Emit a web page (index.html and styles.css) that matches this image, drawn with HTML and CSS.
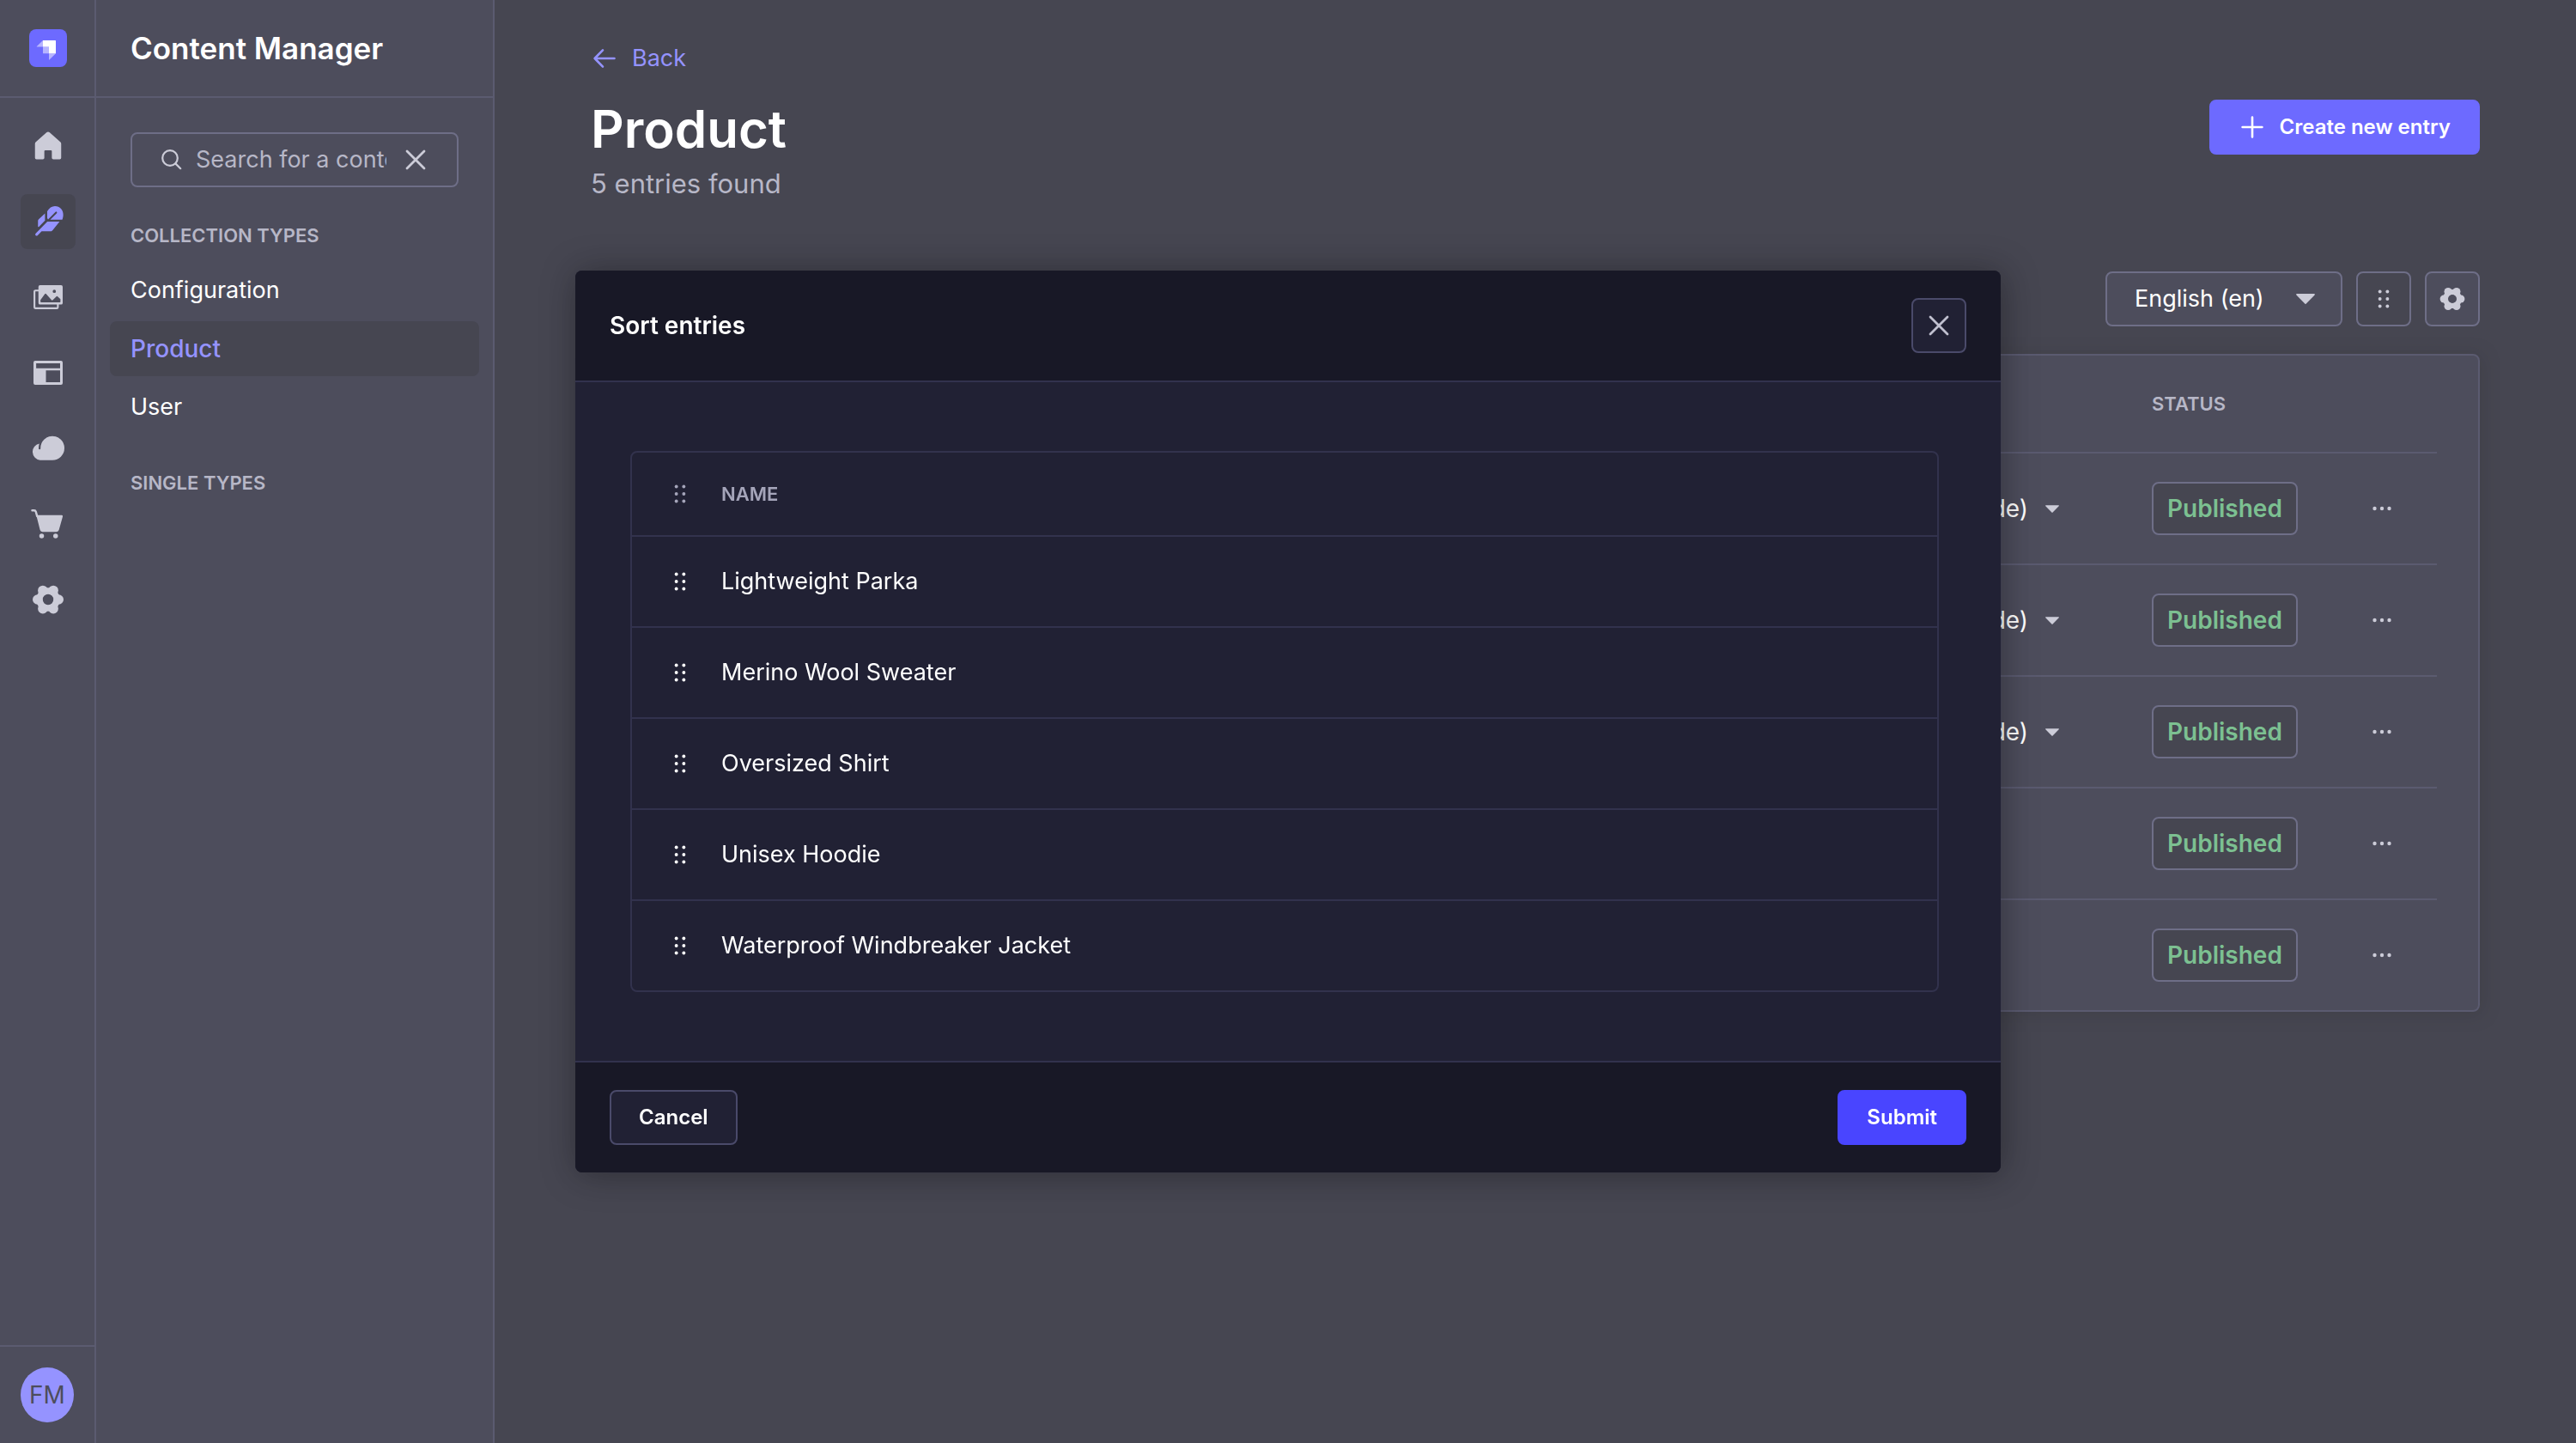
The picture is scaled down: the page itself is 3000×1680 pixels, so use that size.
FILE: index.html
```html
<!DOCTYPE html>
<html lang="en">
<head>
<meta charset="utf-8">
<title>Content Manager</title>
<link rel="stylesheet" href="styles.css">
</head>
<body>
<svg class="sprite" aria-hidden="true">
  <symbol id="gear" viewBox="0 0 32 32">
    <circle cx="16" cy="16" r="8" fill="none" stroke="currentColor" stroke-width="6"/>
    <g fill="currentColor">
      <circle cx="25.8" cy="16" r="4.6"/><circle cx="6.2" cy="16" r="4.6"/>
      <circle cx="20.9" cy="7.5" r="4.6"/><circle cx="11.1" cy="7.5" r="4.6"/>
      <circle cx="20.9" cy="24.5" r="4.6"/><circle cx="11.1" cy="24.5" r="4.6"/>
    </g>
  </symbol>
  <symbol id="drag" viewBox="0 0 32 32">
    <g fill="currentColor">
      <circle cx="10.2" cy="4.600" r="2.600"/><circle cx="21.8" cy="4.600" r="2.600"/>
      <circle cx="10.2" cy="16" r="2.600"/><circle cx="21.8" cy="16" r="2.600"/>
      <circle cx="10.2" cy="27.400" r="2.600"/><circle cx="21.8" cy="27.400" r="2.600"/>
    </g>
  </symbol>
  <symbol id="cross" viewBox="0 0 32 32">
    <path d="M6 6l20 20M26 6L6 26" fill="none" stroke="currentColor" stroke-width="2.8" stroke-linecap="round"/>
  </symbol>
  <symbol id="caret" viewBox="0 0 22 12">
    <path d="M1 0h20a.8.8 0 0 1 .6 1.4L11.8 11.6a1.1 1.1 0 0 1-1.6 0L.4 1.4A.8.8 0 0 1 1 0z" fill="currentColor"/>
  </symbol>
  <symbol id="more" viewBox="0 0 24 6">
    <g fill="currentColor"><circle cx="3.500" cy="3" r="2.200"/><circle cx="12" cy="3" r="2.200"/><circle cx="20.500" cy="3" r="2.200"/></g>
  </symbol>
</svg>

<div class="app">
  <nav class="rail" aria-label="Main">
    <a class="rail-logo" href="#" aria-label="Dashboard">
      <svg viewBox="0 0 44 44" width="44" height="44">
        <rect width="44" height="44" rx="8" fill="#4945ff"/>
        <path d="M16 13h14.4a.6.6 0 0 1 .6.6V28.300h-8V20.500H16z" fill="#fff"/>
        <path d="M16 20.500h7v7.800h-6.600a.4.4 0 0 1-.4-.4zM16 13v7.500H9a.3.3 0 0 1-.2-.5zM23 28.300h8l-7.500 7.300a.3.3 0 0 1-.5-.2z" fill="#fff" opacity=".5"/>
      </svg>
    </a>
    <ul class="rail-list">
      <li><a class="rail-link" href="#" aria-label="Home"><svg class="icon-lg" viewBox="0 0 32 32"><path fill="currentColor" d="M28.200 14v13a1.400 1.400 0 0 1-1.400 1.400h-5.900a1.400 1.400 0 0 1-1.400-1.400v-6.200a.9.9 0 0 0-.9-.9h-5.200a.9.9 0 0 0-.9.9V27a1.400 1.400 0 0 1-1.400 1.400H5.200A1.400 1.400 0 0 1 3.800 27V14a2.400 2.400 0 0 1 .8-1.800l9.900-8.800a2.200 2.200 0 0 1 3 0l9.900 8.800a2.400 2.400 0 0 1 .8 1.800z"/></svg></a></li>
      <li><a class="rail-link is-active" href="#" aria-label="Content Manager"><svg class="icon-lg" viewBox="0 0 32 32"><g fill="currentColor"><path d="M15.200 12.800V6.300C17 3.200 19.400 1.500 22.400 1.500c4.600 0 7.900 3.500 7.700 8.300-.1 1.900-.4 3.300-.9 4.300H18l6.100-6a.8.8 0 0 0-1.200-1.100l-6.900 6.900z"/><path d="M13.100 8.300v6.700l-5.600 5.700c-.6.500-.9.200-.9-.4V15.200c0-.6.300-1.100.7-1.500z"/><path d="M15.300 15.900H26.700L20.600 23.600c-.7.900-1.200 1.400-2.200 1.400H10l-3.700 3.800c-.6.600-1.300.6-1.800.1-.6-.5-.6-1.200 0-1.900z"/></g></svg></a></li>
      <li><a class="rail-link" href="#" aria-label="Media Library"><svg class="icon-lg" viewBox="0 0 32 32"><path fill="none" stroke="currentColor" stroke-width="1.700" stroke-linejoin="round" d="M7.500 9.800H4.200a.9.900 0 0 0-.9.900V25.300a1 1 0 0 0 1 1h19.800a1 1 0 0 0 1-1V22"/><path fill="currentColor" fill-rule="evenodd" d="M8.500 4.800h19.600a1.500 1.500 0 0 1 1.500 1.500v15a1.500 1.500 0 0 1-1.500 1.500H8.500A1.500 1.500 0 0 1 7 21.300v-15a1.500 1.500 0 0 1 1.500-1.500zM8.900 18.500V20.200a.6.6 0 0 0 .6.600H26.900a.6.600 0 0 0 .6-.6V17.800l-2.600-2.500a.8.8 0 0 0-1.200 0l-3.300 3.300a.8.8 0 0 1-1.200 0L14.200 13a.8.8 0 0 0-1.200 0zM21.800 9a1.500 1.500 0 1 0 0 3 1.500 1.500 0 0 0 0-3z"/></svg></a></li>
      <li><a class="rail-link" href="#" aria-label="Content-Type Builder"><svg class="icon-lg" viewBox="0 0 32 32"><path fill="currentColor" fill-rule="evenodd" d="M4 4.800h24a1.600 1.600 0 0 1 1.600 1.600v19.200a1.600 1.600 0 0 1-1.600 1.600H4a1.600 1.600 0 0 1-1.600-1.600V6.400A1.600 1.600 0 0 1 4 4.800zM4.900 7.200v4.600h22.300V7.200zM14 13.700v11.100h13.200V13.700z"/></svg></a></li>
      <li><a class="rail-link" href="#" aria-label="Cloud"><svg class="icon-lg" viewBox="0 0 32 32"><path fill="currentColor" d="M20 4.600A11.100 11.100 0 0 0 9 15.600v.6a.9.900 0 0 1-1.800 0v-.6c0-1.500.2-2.700.6-4A7.800 7.800 0 0 0 8.600 27H20a11.200 11.200 0 0 0 0-22.400z"/></svg></a></li>
      <li><a class="rail-link" href="#" aria-label="Marketplace"><svg class="icon-lg" viewBox="0 0 32 32"><path fill="none" stroke="currentColor" stroke-width="2" stroke-linecap="round" d="M1.200 3.400H3a1.700 1.700 0 0 1 1.600 1.200l1.200 4.200"/><path fill="currentColor" d="M5 7.800h23.600a1 1 0 0 1 1 1.300l-3.500 12.500a2.300 2.300 0 0 1-2.200 1.700H10.700a2.300 2.300 0 0 1-2.200-1.700z"/><circle cx="10" cy="27.200" r="2.200" fill="currentColor"/><circle cx="23" cy="27.200" r="2.200" fill="currentColor"/></svg></a></li>
      <li><a class="rail-link" href="#" aria-label="Settings"><svg class="icon-lg"><use href="#gear"/></svg></a></li>
    </ul>
    <div class="rail-user"><button class="avatar" type="button">FM</button></div>
  </nav>

  <aside class="subnav">
    <header class="subnav-head"><h2>Content Manager</h2></header>
    <div class="subnav-body">
      <div class="search">
        <svg class="icon-sm" viewBox="0 0 24 24"><g fill="none" stroke="currentColor" stroke-width="2.200" stroke-linecap="round"><circle cx="10" cy="10" r="8.800"/><path d="M16.600 16.600l5.600 5.600"/></g></svg>
        <input type="text" aria-label="Search for a content type" placeholder="Search for a content type">
        <button type="button" aria-label="Clear"><svg class="icon-md"><use href="#cross"/></svg></button>
      </div>
      <section>
        <h3 class="sigma">Collection Types</h3>
        <ul class="types">
          <li><a href="#">Configuration</a></li>
          <li><a class="is-active" href="#">Product</a></li>
          <li><a href="#">User</a></li>
        </ul>
      </section>
      <section><h3 class="sigma">Single Types</h3></section>
    </div>
  </aside>

  <main class="main">
    <a class="back" href="#">
      <svg viewBox="0 0 28 24" width="28" height="24"><path fill="none" stroke="currentColor" stroke-width="2.600" stroke-linecap="round" stroke-linejoin="round" d="M25.500 12H2.600M12 2.400L2.600 12 12 21.600"/></svg>
      <span>Back</span>
    </a>
    <div class="page-head">
      <h1>Product</h1>
      <button class="btn btn-primary" type="button">
        <svg viewBox="0 0 32 32" width="32" height="32"><path fill="none" stroke="currentColor" stroke-width="2.600" stroke-linecap="round" d="M16 4.600v22.800M4.600 16h22.800"/></svg>
        <span>Create new entry</span>
      </button>
    </div>
    <p class="page-sub">5 entries found</p>
    <div class="actions">
      <div class="select">
        <select aria-label="Locale"><option>English (en)</option></select>
        <svg width="22" height="12"><use href="#caret"/></svg>
      </div>
      <button class="icon-btn is-clear" type="button" aria-label="Sort entries"><svg class="icon-sm"><use href="#drag"/></svg></button>
      <button class="icon-btn" type="button" aria-label="View settings"><svg class="icon-md"><use href="#gear"/></svg></button>
    </div>
    <div class="card">
      <table class="entries">
        <colgroup><col><col class="col-locale"><col class="col-status"><col class="col-more"></colgroup>
        <thead><tr><th></th><th></th><th class="sigma">Status</th><th></th></tr></thead>
        <tbody>
          <tr><td></td><td><div class="locale">(de)<svg width="16" height="9"><use href="#caret"/></svg></div></td><td><span class="badge">Published</span></td><td><button class="more" type="button" aria-label="Row actions"><svg width="24" height="6"><use href="#more"/></svg></button></td></tr>
          <tr><td></td><td><div class="locale">(de)<svg width="16" height="9"><use href="#caret"/></svg></div></td><td><span class="badge">Published</span></td><td><button class="more" type="button" aria-label="Row actions"><svg width="24" height="6"><use href="#more"/></svg></button></td></tr>
          <tr><td></td><td><div class="locale">(de)<svg width="16" height="9"><use href="#caret"/></svg></div></td><td><span class="badge">Published</span></td><td><button class="more" type="button" aria-label="Row actions"><svg width="24" height="6"><use href="#more"/></svg></button></td></tr>
          <tr><td></td><td></td><td><span class="badge">Published</span></td><td><button class="more" type="button" aria-label="Row actions"><svg width="24" height="6"><use href="#more"/></svg></button></td></tr>
          <tr><td></td><td></td><td><span class="badge">Published</span></td><td><button class="more" type="button" aria-label="Row actions"><svg width="24" height="6"><use href="#more"/></svg></button></td></tr>
        </tbody>
      </table>
    </div>
  </main>
</div>

<div class="overlay">
  <div class="modal" role="dialog" aria-modal="true" aria-labelledby="modal-title">
    <header class="modal-head">
      <h2 id="modal-title">Sort entries</h2>
      <button class="icon-btn" type="button" aria-label="Close"><svg class="icon-md"><use href="#cross"/></svg></button>
    </header>
    <div class="modal-body">
      <table class="sort">
        <thead><tr><th class="grip"><svg class="icon-sm"><use href="#drag"/></svg></th><th class="sigma">Name</th></tr></thead>
        <tbody>
          <tr><td class="grip"><svg class="icon-sm"><use href="#drag"/></svg></td><td>Lightweight Parka</td></tr>
          <tr><td class="grip"><svg class="icon-sm"><use href="#drag"/></svg></td><td>Merino Wool Sweater</td></tr>
          <tr><td class="grip"><svg class="icon-sm"><use href="#drag"/></svg></td><td>Oversized Shirt</td></tr>
          <tr><td class="grip"><svg class="icon-sm"><use href="#drag"/></svg></td><td>Unisex Hoodie</td></tr>
          <tr><td class="grip"><svg class="icon-sm"><use href="#drag"/></svg></td><td>Waterproof Windbreaker Jacket</td></tr>
        </tbody>
      </table>
    </div>
    <footer class="modal-foot">
      <button class="btn" type="button">Cancel</button>
      <button class="btn btn-primary" type="button">Submit</button>
    </footer>
  </div>
</div>
</body>
</html>
```
FILE: styles.css
```css
:root {
  --bg: #181826;
  --surface: #212134;
  --line: #32324d;
  --line-strong: #4a4a6a;
  --muted: #a5a5ba;
  --icon: #c0c0cf;
  --text: #ffffff;
  --primary: #4945ff;
  --primary-text: #7b79ff;
  --success: #5cb176;
}

* { box-sizing: border-box; }

body {
  margin: 0;
  background: var(--bg);
  color: var(--text);
  font: 400 27px/40px Inter, "Liberation Sans", sans-serif;
}

h1, h2, h3, p, ul { margin: 0; padding: 0; }
ul { list-style: none; }
a { color: inherit; text-decoration: none; }
svg { display: block; flex: none; }
button, input, select { font: inherit; color: inherit; margin: 0; }
button { cursor: pointer; }
table { border-collapse: separate; border-spacing: 0; width: 100%; table-layout: fixed; }
th, td { padding: 0; text-align: left; }

.sprite { position: absolute; width: 0; height: 0; }
.icon-sm { width: 24px; height: 24px; }
.icon-md { width: 32px; height: 32px; }
.icon-lg { width: 40px; height: 40px; }

.sigma {
  color: var(--muted);
  font-size: 22px;
  font-weight: 600;
  line-height: 32px;
  text-transform: uppercase;
}

.app { display: flex; min-height: 100vh; }

/* Icon rail */
.rail {
  display: flex;
  flex-direction: column;
  width: 112px;
  flex: none;
  background: var(--surface);
  border-right: 2px solid var(--line);
}
.rail-logo {
  display: flex;
  align-items: center;
  height: 114px;
  padding-left: 34px;
  border-bottom: 2px solid var(--line);
}
.rail-list {
  display: flex;
  flex-direction: column;
  gap: 24px;
  flex: 1;
  padding: 24px 0 24px 24px;
}
.rail-link {
  display: flex;
  align-items: center;
  justify-content: center;
  width: 64px;
  height: 64px;
  border-radius: 8px;
  color: var(--icon);
}
.rail-link.is-active { background: var(--bg); color: var(--primary-text); }
.rail-user {
  display: flex;
  padding: 24px;
  border-top: 2px solid var(--line);
}
.avatar {
  width: 100%;
  height: 64px;
  padding: 0;
  border: 0;
  border-radius: 50%;
  background: var(--primary-text);
  color: var(--surface);
  font-size: 28px;
}

/* Content type navigation */
.subnav {
  width: 464px;
  flex: none;
  background: var(--surface);
  border-right: 2px solid var(--line);
}
.subnav-head {
  display: flex;
  align-items: center;
  height: 114px;
  padding: 0 40px;
  border-bottom: 2px solid var(--line);
}
.subnav-head h2 { font-size: 35px; font-weight: 600; line-height: 44px; }
.subnav-body { padding: 40px 16px; }
.search {
  display: flex;
  align-items: center;
  height: 64px;
  margin: 0 24px 40px;
  padding: 0 32px 0 34px;
  border: 2px solid var(--line-strong);
  border-radius: 8px;
  color: var(--icon);
}
.search input {
  flex: 1;
  min-width: 0;
  height: 40px;
  margin: 0 18px 0 16px;
  padding: 0;
  border: 0;
  outline: 0;
  background: none;
}
.search input::placeholder { color: var(--muted); opacity: 1; }
.search button { padding: 0; border: 0; background: none; color: inherit; }
.subnav section h3 { padding-left: 24px; margin-bottom: 16px; }
.types { display: flex; flex-direction: column; gap: 4px; margin-bottom: 40px; }
.types a { display: block; padding: 12px 24px; border-radius: 8px; }
.types a.is-active {
  background: var(--bg);
  color: var(--primary-text);
  font-size: 28px;
  font-weight: 500;
}

/* Page */
.main { flex: 1; min-width: 0; padding: 48px 112px; }
.back {
  display: inline-flex;
  align-items: center;
  gap: 18px;
  padding-left: 2px;
  color: var(--primary-text);
  vertical-align: top;
}
.page-head {
  display: flex;
  align-items: flex-start;
  justify-content: space-between;
  margin-top: 28px;
}
.page-head h1 { font-size: 60px; font-weight: 600; line-height: 68px; }
.page-sub { margin-top: 6px; color: var(--muted); font-size: 31px; line-height: 48px; }

.btn {
  display: flex;
  align-items: center;
  height: 64px;
  gap: 16px;
  padding: 0 32px;
  border: 2px solid var(--line-strong);
  border-radius: 8px;
  background: var(--surface);
  font-size: 24px;
  font-weight: 600;
  line-height: 32px;
}
.btn-primary { border-color: var(--primary); background: var(--primary); }

.actions {
  display: flex;
  justify-content: flex-end;
  gap: 16px;
  margin: 78px 0 32px;
}
.select {
  display: grid;
  align-items: center;
  width: 276px;
  height: 64px;
  color: var(--icon);
}
.select select, .select svg { grid-area: 1 / 1; }
.select svg { justify-self: end; margin-right: 32px; pointer-events: none; }
.select select {
  width: 100%;
  height: 100%;
  padding: 0 64px 0 32px;
  border: 2px solid var(--line-strong);
  border-radius: 8px;
  background: var(--surface);
  color: var(--text);
  appearance: none;
}
.icon-btn {
  display: flex;
  align-items: center;
  justify-content: center;
  width: 64px;
  height: 64px;
  padding: 0;
  border: 2px solid var(--line-strong);
  border-radius: 8px;
  background: var(--surface);
  color: var(--icon);
}
.icon-btn.is-clear { background: none; }

.card {
  padding: 0 48px;
  border: 2px solid var(--line);
  border-radius: 8px;
  background: var(--surface);
  box-shadow: 2px 2px 20px rgba(3, 3, 5, 0.35);
}
.col-locale { width: 330px; }
.col-status { width: 236px; }
.col-more { width: 96px; }
.entries th { height: 114px; border-bottom: 2px solid var(--line); }
.entries td { height: 130px; border-bottom: 2px solid var(--line); }
.entries tbody tr:last-child td { height: 128px; border-bottom: 0; }
.locale {
  display: flex;
  align-items: center;
  justify-content: flex-end;
  gap: 20px;
  padding-right: 108px;
  font-size: 28px;
}
.locale svg { color: var(--icon); }
.badge {
  display: flex;
  width: fit-content;
  padding: 9px 16px;
  border: 2px solid var(--line-strong);
  border-radius: 8px;
  background: var(--bg);
  color: var(--success);
  font-size: 28px;
  font-weight: 600;
}
.more {
  display: flex;
  align-items: center;
  justify-content: center;
  width: 64px;
  height: 64px;
  padding: 0;
  border: 0;
  background: none;
  color: var(--icon);
}

/* Dialog */
.overlay {
  position: fixed;
  inset: 0;
  display: flex;
  align-items: center;
  justify-content: center;
  background: rgba(255, 255, 255, 0.2);
}
.modal {
  width: 100%;
  max-width: 1660px;
  border-radius: 8px;
  background: var(--surface);
  box-shadow: 2px 2px 40px rgba(3, 3, 5, 0.35);
  overflow: hidden;
}
.modal-head, .modal-foot {
  display: flex;
  align-items: center;
  justify-content: space-between;
  padding: 32px 40px;
  background: var(--bg);
}
.modal-head { border-bottom: 2px solid var(--line); }
.modal-foot { border-top: 2px solid var(--line); }
.modal-head h2 { font-size: 28px; font-weight: 600; line-height: 40px; }
.modal-body { padding: 80px 72px 80px 64px; }
.sort { border: 2px solid var(--line); border-radius: 8px; }
.sort th { height: 96px; }
.sort td { height: 106px; border-top: 2px solid var(--line); }
.sort .grip { width: 104px; padding-left: 44px; }
.sort th.grip { color: var(--muted); }
```
